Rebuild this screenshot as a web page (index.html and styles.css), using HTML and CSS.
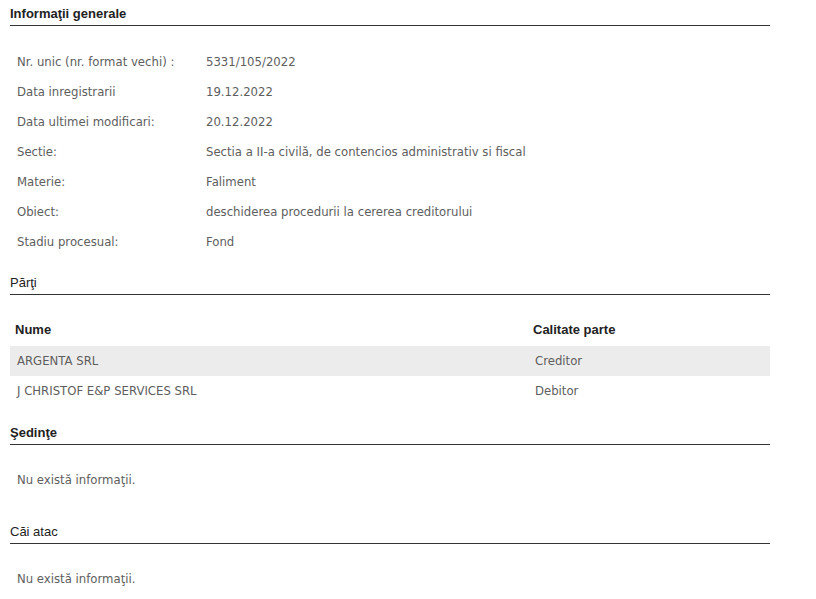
FILE: index.html
```html
<!DOCTYPE html>
<html lang="ro">
<head>
    <meta charset="UTF-8">
    <title>Dosar 5331/105/2022</title>
    <link rel="stylesheet" href="styles.css">
</head>
<body>

    <div class="page">

        <!-- Informatii generale -->
        <h2 class="section-title">Informaţii generale</h2>
        <table class="info">
            <tr><td class="label">Nr. unic (nr. format vechi) :</td><td>5331/105/2022</td></tr>
            <tr><td class="label">Data inregistrarii</td><td>19.12.2022</td></tr>
            <tr><td class="label">Data ultimei modificari:</td><td>20.12.2022</td></tr>
            <tr><td class="label">Sectie:</td><td>Sectia a II-a civilă, de contencios administrativ si fiscal</td></tr>
            <tr><td class="label">Materie:</td><td>Faliment</td></tr>
            <tr><td class="label">Obiect:</td><td>deschiderea procedurii la cererea creditorului</td></tr>
            <tr><td class="label">Stadiu procesual:</td><td>Fond</td></tr>
        </table>

        <!-- Parti -->
        <h2 class="section-title light">Părţi</h2>
        <table class="parties">
            <thead>
                <tr><th class="col-name">Nume</th><th>Calitate parte</th></tr>
            </thead>
            <tbody>
                <tr class="odd"><td>ARGENTA SRL</td><td>Creditor</td></tr>
                <tr><td>J CHRISTOF E&amp;P SERVICES SRL</td><td>Debitor</td></tr>
            </tbody>
        </table>

        <!-- Sedinte -->
        <h2 class="section-title">Şedinţe</h2>
        <p class="empty">Nu există informaţii.</p>

        <!-- Cai atac -->
        <h2 class="section-title light">Căi atac</h2>
        <p class="empty">Nu există informaţii.</p>

    </div>

</body>
</html>
```

FILE: styles.css
```css
body {
    margin: 0;
    padding: 0;
    background-color: #ffffff;
    font-family: Tahoma, 'DejaVu Sans', sans-serif;
    font-size: 11.7px;
    color: #5e5e5e;
}

.page {
    width: 760px;
    margin-left: 10px;
    padding-top: 4px;
}

.section-title {
    margin: 0;
    font-family: Arial, 'Liberation Sans', sans-serif;
    font-size: 13px;
    font-weight: bold;
    line-height: 20px;
    color: #222222;
    padding-bottom: 1px;
    border-bottom: 1px solid #333333;
}

.section-title.light {
    font-weight: normal;
}

table {
    width: 100%;
    border-collapse: collapse;
}

.info {
    margin: 21px 0 16px 0;
}

.info td {
    height: 30px;
    padding: 0 0 0 7px;
    vertical-align: middle;
}

.info td.label {
    width: 182px;
}

.parties {
    margin: 21px 0 17px 0;
}

.parties th {
    height: 27px;
    padding: 0 0 3px 5px;
    text-align: left;
    font-family: Arial, 'Liberation Sans', sans-serif;
    font-size: 13px;
    color: #222222;
}

.parties th.col-name {
    width: 513px;
}

.parties td {
    height: 30px;
    padding: 0 0 0 7px;
}

.parties tr.odd td {
    background-color: #ececec;
}

.empty {
    margin: 20px 0 27px 0;
    padding-left: 7px;
    line-height: 30px;
}
```
